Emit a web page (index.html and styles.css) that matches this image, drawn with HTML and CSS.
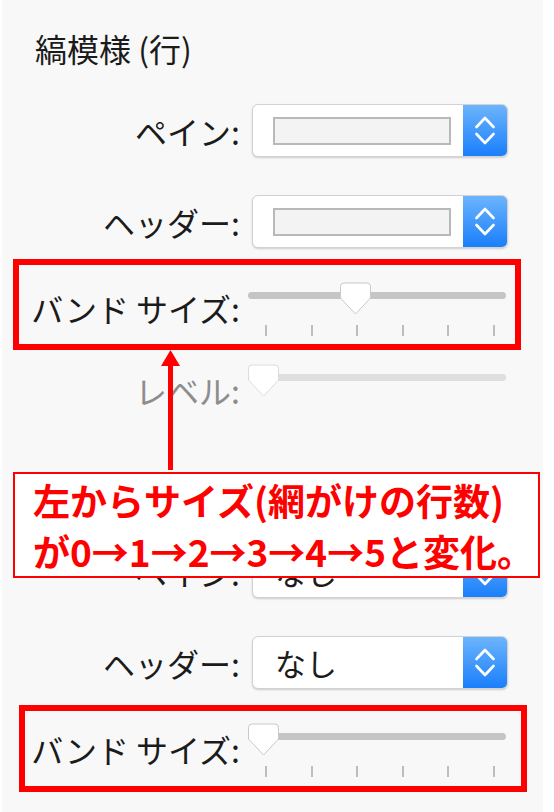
FILE: index.html
```html
<!DOCTYPE html>
<html lang="ja">
<head>
    <meta charset="UTF-8">
    <meta name="viewport" content="width=device-width, initial-scale=1.0">
    <title>縞模様 (行)</title>
    <link rel="stylesheet" href="styles.css">
</head>
<body>
    <div class="page">
        <div class="panel">
            <h2 class="section-title">縞模様 (行)</h2>

            <div class="row select-row first">
                <span class="label">ペイン:</span>
                <div class="popup">
                    <span class="swatch"></span>
                    <span class="stepper">
                        <svg width="20" height="31" viewBox="0 0 20 31"><polyline points="1.5,12 10,3 18.5,12"/><polyline points="1.5,19 10,28 18.5,19"/></svg>
                    </span>
                </div>
            </div>

            <div class="row select-row">
                <span class="label">ヘッダー:</span>
                <div class="popup">
                    <span class="swatch"></span>
                    <span class="stepper">
                        <svg width="20" height="31" viewBox="0 0 20 31"><polyline points="1.5,12 10,3 18.5,12"/><polyline points="1.5,19 10,28 18.5,19"/></svg>
                    </span>
                </div>
            </div>

            <div class="row slider-row band">
                <span class="label">バンド サイズ:</span>
                <div class="slider">
                    <div class="track-area">
                        <span class="track"></span>
                        <span class="thumb" style="left: 92px">
                            <svg width="33" height="34" viewBox="0 0 33 34"><path d="M5,1 H28 A3.5,3.5 0 0 1 31.5,4.5 V16 L16.5,32 L1.5,16 V4.5 A3.5,3.5 0 0 1 5,1 Z"/></svg>
                        </span>
                    </div>
                    <div class="ticks"><i></i><i></i><i></i><i></i><i></i><i></i></div>
                </div>
            </div>

            <div class="row slider-row level disabled">
                <span class="label">レベル:</span>
                <div class="slider">
                    <div class="track-area">
                        <span class="track"></span>
                        <span class="thumb" style="left: 0px">
                            <svg width="33" height="34" viewBox="0 0 33 34"><path d="M5,1 H28 A3.5,3.5 0 0 1 31.5,4.5 V16 L16.5,32 L1.5,16 V4.5 A3.5,3.5 0 0 1 5,1 Z"/></svg>
                        </span>
                    </div>
                </div>
            </div>

            <div class="row select-row after-gap">
                <span class="label">ペイン:</span>
                <div class="popup">
                    <span class="value">なし</span>
                    <span class="stepper">
                        <svg width="20" height="31" viewBox="0 0 20 31"><polyline points="1.5,12 10,3 18.5,12"/><polyline points="1.5,19 10,28 18.5,19"/></svg>
                    </span>
                </div>
            </div>

            <div class="row select-row">
                <span class="label">ヘッダー:</span>
                <div class="popup">
                    <span class="value">なし</span>
                    <span class="stepper">
                        <svg width="20" height="31" viewBox="0 0 20 31"><polyline points="1.5,12 10,3 18.5,12"/><polyline points="1.5,19 10,28 18.5,19"/></svg>
                    </span>
                </div>
            </div>

            <div class="row slider-row band">
                <span class="label">バンド サイズ:</span>
                <div class="slider">
                    <div class="track-area">
                        <span class="track"></span>
                        <span class="thumb" style="left: 0px">
                            <svg width="33" height="34" viewBox="0 0 33 34"><path d="M5,1 H28 A3.5,3.5 0 0 1 31.5,4.5 V16 L16.5,32 L1.5,16 V4.5 A3.5,3.5 0 0 1 5,1 Z"/></svg>
                        </span>
                    </div>
                    <div class="ticks"><i></i><i></i><i></i><i></i><i></i><i></i></div>
                </div>
            </div>
        </div>

        <!-- 注釈 -->
        <div class="mark-box box-top"></div>
        <div class="mark-box box-bottom"></div>
        <svg class="arrow" width="22" height="122" viewBox="0 0 22 122">
            <polygon points="10.5,1 20,17 1,17"/>
            <rect x="8" y="15" width="5" height="106"/>
        </svg>
        <div class="callout">
            左からサイズ(網がけの行数)<br>
            が0→1→2→3→4→5と変化。
        </div>
    </div>
</body>
</html>
```

FILE: styles.css
```css
body {
    margin: 0;
    background-color: #ffffff;
    font-family: "Noto Sans CJK JP", "Noto Sans", sans-serif;
    color: #1b1b1b;
}
.page {
    position: relative;
    width: 554px;
    height: 812px;
    overflow: hidden;
}
.panel {
    margin-left: 2px;
    width: 541px;
    height: 812px;
    padding-top: 27px;
    box-sizing: border-box;
    background-color: #f8f8f8;
}
.section-title {
    margin: 0 0 0 33px;
    font-size: 32px;
    font-weight: normal;
    line-height: 42px;
}
.row {
    display: grid;
    grid-template-columns: 238px 256px;
    column-gap: 12px;
}
.label {
    font-size: 32px;
    line-height: 40px;
    text-align: right;
    white-space: nowrap;
}
.select-row {
    align-items: center;
    height: 53px;
    margin-top: 38px;
}
.select-row.first {
    margin-top: 35px;
}
.select-row.after-gap {
    margin-top: 135px;
}
.popup {
    display: flex;
    align-items: center;
    height: 53px;
    box-sizing: border-box;
    background-color: #ffffff;
    border: 1px solid #d2d2d2;
    border-radius: 6px;
    box-shadow: 0 1px 2px rgba(0,0,0,0.18);
    overflow: hidden;
}
.swatch {
    margin-left: 20px;
    width: 178px;
    height: 28px;
    box-sizing: border-box;
    border: 2px solid #b9b9b9;
    background-color: #f3f3f3;
}
.value {
    padding-left: 22px;
    font-size: 31px;
    line-height: 40px;
}
.stepper {
    margin-left: auto;
    align-self: stretch;
    width: 44px;
    display: flex;
    align-items: center;
    justify-content: center;
    background: linear-gradient(#6cb4fd, #1a7ffb);
}
.stepper svg {
    fill: none;
    stroke: #ffffff;
    stroke-width: 2.6;
    stroke-linecap: round;
    stroke-linejoin: round;
}
.slider-row {
    align-items: start;
    margin-top: 35px;
}
.slider-row .label {
    padding-top: 5px;
}
.slider-row.level {
    margin-top: 29px;
}
.slider {
    margin-left: -5px;
    width: 260px;
}
.track-area {
    position: relative;
    display: flex;
    align-items: center;
    height: 24px;
}
.track {
    flex: 1;
    height: 7px;
    margin: 0 1px;
    border-radius: 4px;
    background-color: #c5c5c5;
}
.thumb {
    position: absolute;
    top: -1px;
    line-height: 0;
}
.thumb svg path {
    fill: #ffffff;
    stroke: #c9c9c9;
    stroke-width: 1;
}
.ticks {
    display: flex;
    justify-content: space-between;
    height: 11px;
    margin: 18px 12px 0 18px;
}
.ticks i {
    width: 2px;
    background-color: #bdbdbd;
}
.disabled .label {
    color: #8d8d8d;
}
.disabled .track {
    background-color: #dedede;
}
.disabled .thumb svg path {
    stroke: #dcdcdc;
}
.mark-box {
    position: absolute;
    border: 6px solid #ff0000;
    box-sizing: border-box;
}
.box-top {
    left: 13px;
    top: 259px;
    width: 508px;
    height: 91px;
}
.box-bottom {
    left: 19px;
    top: 705px;
    width: 508px;
    height: 87px;
}
.arrow {
    position: absolute;
    left: 160px;
    top: 349px;
    fill: #ff0000;
}
.callout {
    position: absolute;
    left: 13px;
    top: 472px;
    width: 527px;
    height: 106px;
    box-sizing: border-box;
    padding: 1px 0 0 18px;
    border: 2px solid #ff0000;
    background-color: #ffffff;
    color: #ff0000;
    font-size: 37px;
    font-weight: bold;
    line-height: 51px;
    white-space: nowrap;
}
```
